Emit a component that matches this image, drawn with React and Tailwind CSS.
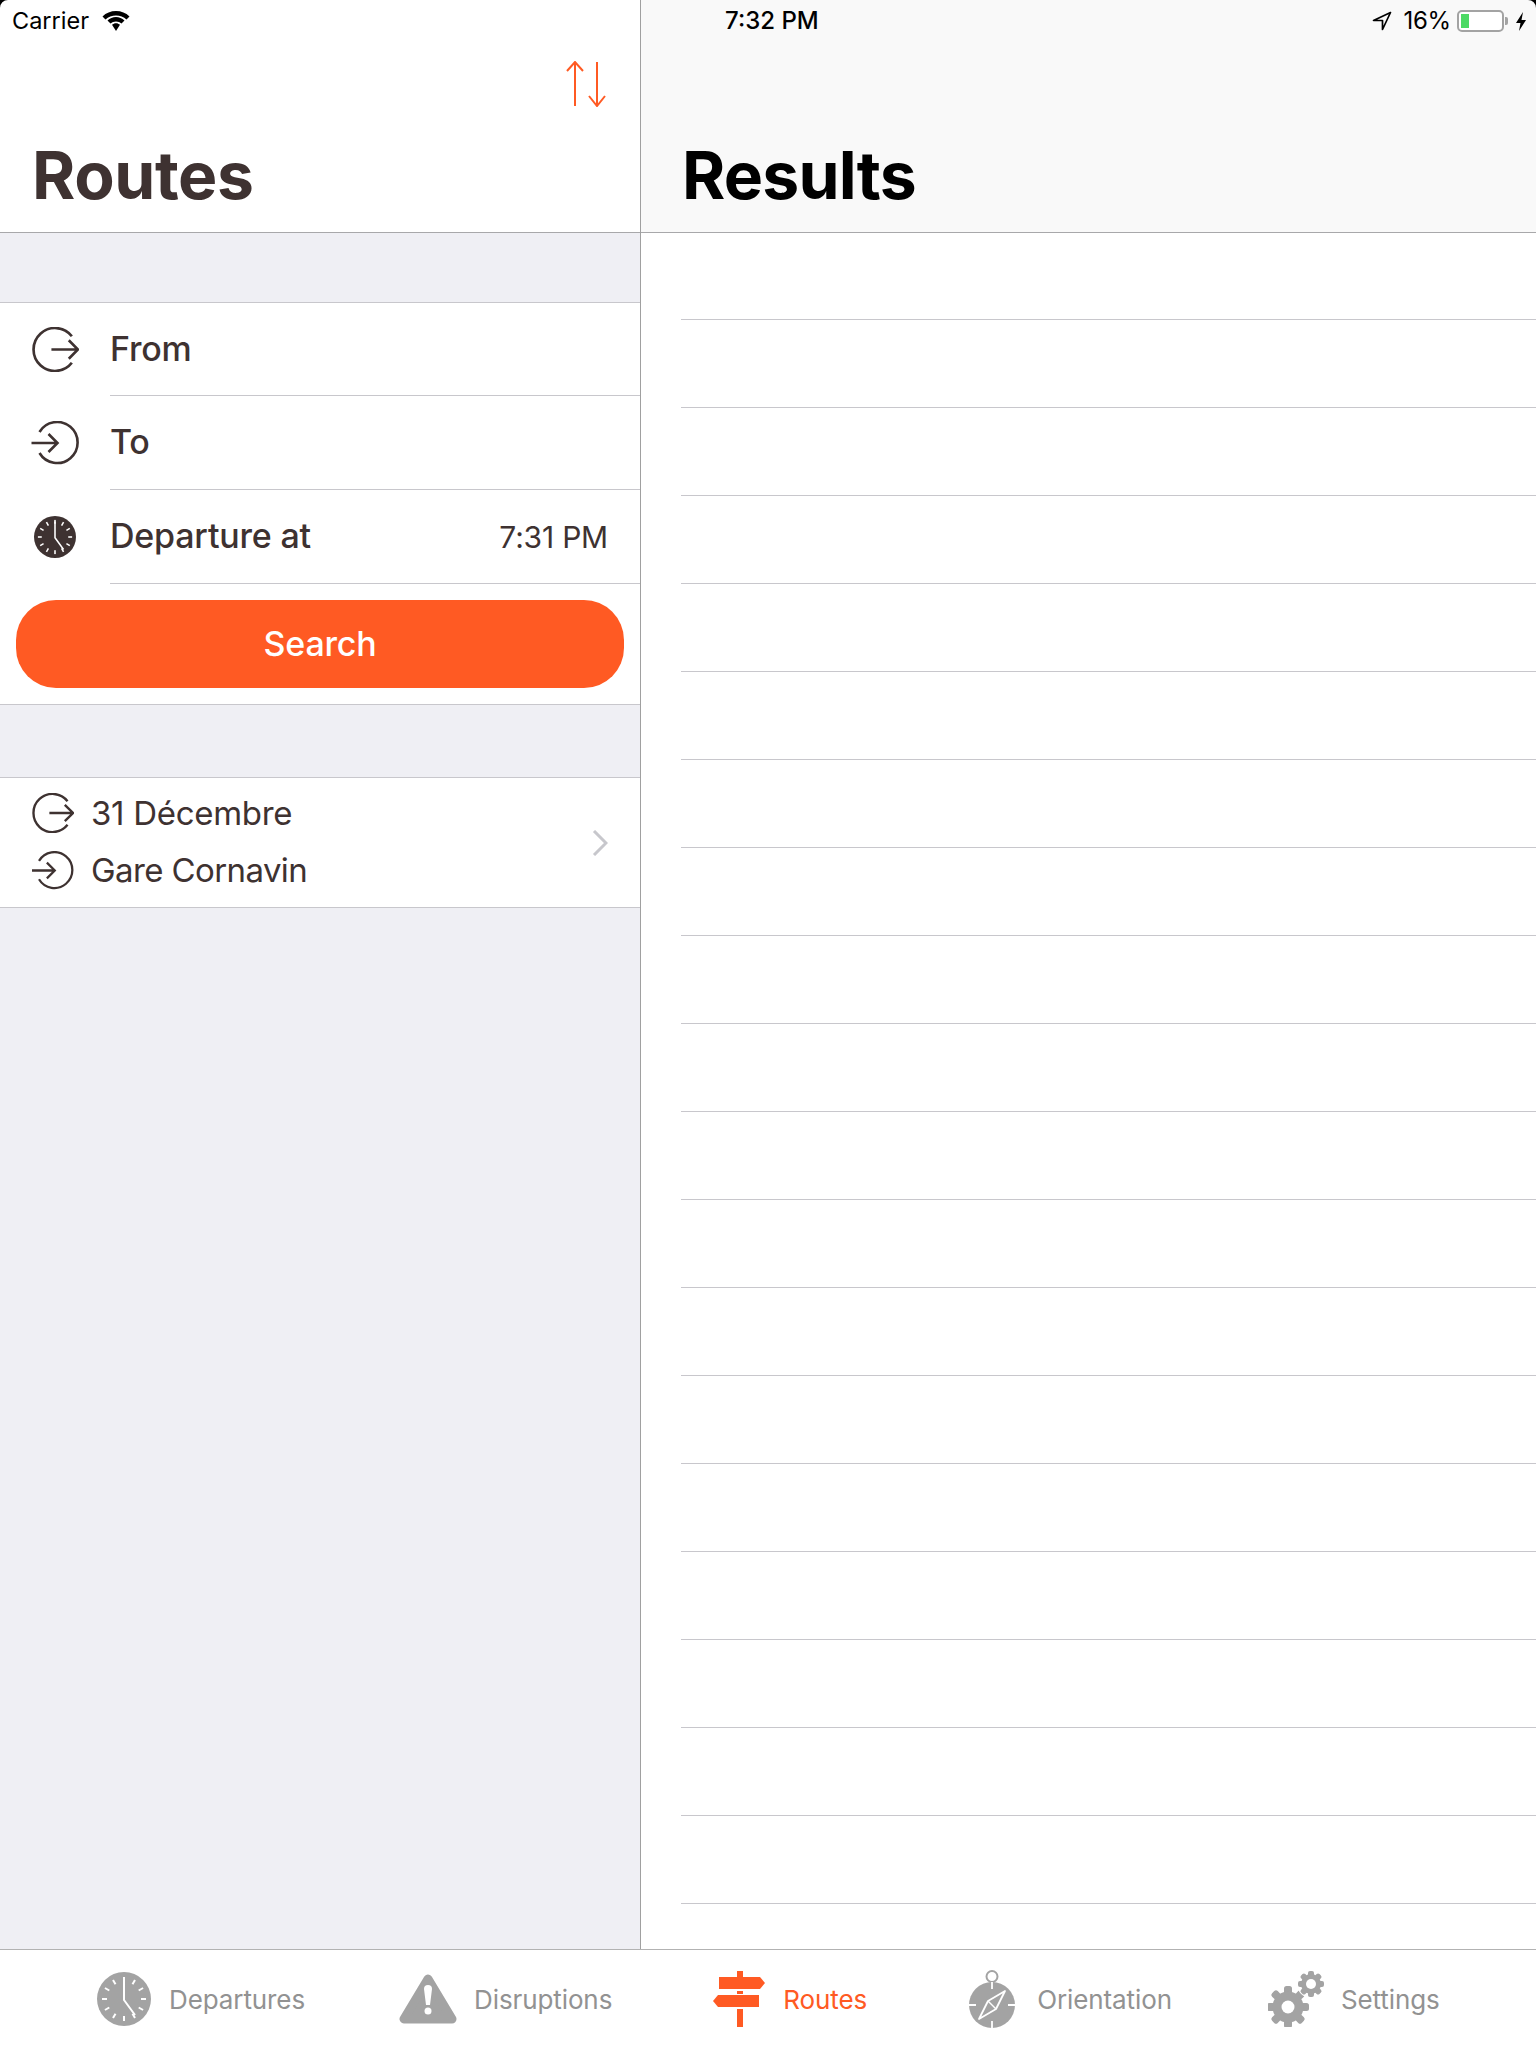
const ORANGE = "#ff5a23";
const DARK = "#3e3231";
const GREY = "#a3a3a3";

const resultLines = Array.from({ length: 19 }, (_, i) => i);
const angles = [0, 30, 60, 90, 120, 150, 180, 210, 240, 270, 300, 330];
const teeth = [0, 45, 90, 135, 180, 225, 270, 315];

const FromIcon = ({ className }) => (
  <svg className={className} viewBox="0 0 46 44" fill="none" stroke={DARK} strokeWidth="2.6">
    <path d="M39 9A21 21 0 1 0 39 35" />
    <path d="M19 22H45M36 13L45 22L36 31" />
  </svg>
);

const ToIcon = ({ className }) => (
  <svg className={className} viewBox="0 0 48 44" fill="none" stroke={DARK} strokeWidth="2.6">
    <path d="M8 11A20.5 20.5 0 1 1 8 32" />
    <path d="M0 22H26M17 13L26 22L17 31" />
  </svg>
);

const ClockIcon = ({ className, fill, tick }) => (
  <svg className={className} viewBox="0 0 54 54">
    <circle cx="27" cy="27" r="27" fill={fill} />
    {angles.map((a) => (
      <rect key={a} x="26" y="5" width="2" height="5" fill={tick} transform={`rotate(${a} 27 27)`} />
    ))}
    <path d="M27 7V28L38 43" fill="none" stroke={tick} strokeWidth="2" />
  </svg>
);

const WarningIcon = () => (
  <svg className="w-[58px] h-[50px]" viewBox="0 0 58 50">
    <path d="M29 5L5 45H53Z" fill={GREY} stroke={GREY} strokeWidth="9" strokeLinejoin="round" />
    <path d="M25 15a4 4 0 0 1 8 0L31 31h-4Z" fill="white" />
    <circle cx="29" cy="37" r="3.5" fill="white" />
  </svg>
);

const SignIcon = () => (
  <svg className="w-[53px] h-[56px]" viewBox="0 0 53 56" fill={ORANGE}>
    <rect x="24" y="0" width="6" height="6" />
    <path d="M6 6H47L52 12L47 18H6Z" />
    <rect x="24" y="20" width="6" height="3" />
    <path d="M46 24H5L0 30L5 36H46Z" />
    <rect x="24" y="38" width="6" height="18" />
  </svg>
);

const CompassIcon = () => (
  <svg className="w-[46px] h-[58px]" viewBox="0 0 46 58">
    <circle cx="23" cy="35" r="23" fill={GREY} />
    <circle cx="23" cy="6.5" r="5.5" fill="none" stroke={GREY} strokeWidth="2" />
    <path d="M23 12V19M23 51V58M0 35H7M39 35H46" stroke="white" strokeWidth="1.8" />
    <path d="M36 21L19 31L10 49L27 39Z" fill="none" stroke="white" strokeWidth="1.8" strokeLinejoin="round" />
    <path d="M19 31L27 39" stroke="white" strokeWidth="1.4" />
  </svg>
);

const GearIcon = () => (
  <svg className="w-[56px] h-[56px]" viewBox="0 0 56 56">
    {teeth.map((a) => (
      <rect key={a} x="16" y="15" width="8" height="8" rx="2.5" fill={GREY} transform={`rotate(${a} 20 36)`} />
    ))}
    <circle cx="20" cy="36" r="15.5" fill={GREY} />
    <circle cx="20" cy="36" r="6.5" fill="white" />
    <circle cx="43" cy="13" r="14" fill="white" />
    {teeth.map((a) => (
      <rect key={a} x="40" y="0" width="6" height="6" rx="2" fill={GREY} transform={`rotate(${a} 43 13)`} />
    ))}
    <circle cx="43" cy="13" r="10" fill={GREY} />
    <circle cx="43" cy="13" r="5" fill="white" />
  </svg>
);

const FormRow = ({ icon, label, value, height, last }) => (
  <div className={`flex ${height}`}>
    <div className="w-[110px] shrink-0 flex items-center">{icon}</div>
    <div className={`flex-1 flex items-center justify-between pr-[32px] ${last ? "" : "border-b border-[#c8c7cc]"}`}>
      <span className="text-[34px] pb-[2px] font-medium tracking-[-0.2px] text-[#3e3231]">{label}</span>
      {value && <span className="text-[30px] pt-[2px] tracking-[-0.2px] text-[#3e3231]">{value}</span>}
    </div>
  </div>
);

const Tab = ({ icon, label, active, gap }) => (
  <div className={`flex items-center ${gap}`}>
    {icon}
    <span className={`text-[26px] tracking-[-0.1px] ${active ? "text-[#ff5a23]" : "text-[#929292]"}`}>{label}</span>
  </div>
);

export default function App() {
  return (
    <div className="relative w-[1536px] h-[2048px] flex flex-col overflow-hidden bg-white font-['Inter',sans-serif]">
      {/* Screen corners */}
      <svg className="absolute top-0 left-0 w-[8px] h-[8px]" viewBox="0 0 8 8">
        <path d="M0 0H8A8 8 0 0 0 0 8Z" fill="black" />
      </svg>
      <svg className="absolute top-0 right-0 w-[8px] h-[8px]" viewBox="0 0 8 8">
        <path d="M0 0H8V8A8 8 0 0 0 0 0Z" fill="black" />
      </svg>

      <div className="flex-1 flex min-h-0">
        {/* Left column */}
        <div className="w-[641px] shrink-0 flex flex-col border-r border-[#a0a0a0] bg-[#efeff4]">
          <div className="h-[233px] shrink-0 flex flex-col bg-white border-b border-[#a8a8aa]">
            <div className="h-[42px] shrink-0 flex items-center pl-[12px] gap-[13px]">
              <span className="text-[23.500px] text-black">Carrier</span>
              <svg className="w-[28px] h-[20px]" viewBox="0 0 28 20" fill="black">
                <path d="M14 0C8.800 0 4 2 0.500 5.400L3.500 8.500C6.300 5.800 10 4.400 14 4.400S21.700 5.800 24.500 8.500L27.500 5.400C24 2 19.200 0 14 0Z" />
                <path d="M14 6C10.800 6 7.800 7.200 5.500 9.500L8.500 12.600C10 11.300 11.900 10.500 14 10.500S18 11.300 19.500 12.600L22.500 9.500C20.200 7.200 17.200 6 14 6Z" />
                <path d="M14 12.200C12.500 12.200 11.100 12.800 10 13.800L14 20L18 13.800C16.900 12.800 15.500 12.200 14 12.200Z" />
              </svg>
            </div>
            <div className="h-[48px] shrink-0 flex justify-end pt-[19px] pr-[34px]">
              <svg className="w-[40px] h-[46px]" viewBox="0 0 40 46" fill="none" stroke={ORANGE} strokeWidth="2">
                <path d="M9 45V1M1 10L9 1L17 10" />
                <path d="M31 1V45M23 35L31 45L39 35" />
              </svg>
            </div>
            <div className="flex-1 flex items-end pl-[32px] pb-[17px]">
              <h1 className="text-[66px] leading-[80px] font-bold tracking-[-0.4px] text-[#3e3231]">Routes</h1>
            </div>
          </div>

          {/* Search form */}
          <div className="mt-[69px] flex flex-col bg-white border-y border-[#c8c7cc]">
            <FormRow height="h-[93px]" label="From" icon={<FromIcon className="ml-[32px] w-[47px] h-[45px]" />} />
            <FormRow height="h-[94px]" label="To" icon={<ToIcon className="ml-[31px] w-[49px] h-[44px]" />} />
            <FormRow
              height="h-[94px]"
              label="Departure at"
              value="7:31 PM"
              icon={<ClockIcon className="ml-[34px] w-[42px] h-[42px]" fill={DARK} tick="white" />}
            />
            <div className="px-[16px] py-[16px]">
              <button className="w-full h-[88px] pb-[2px] rounded-[40px] bg-[#ff5a23] text-white text-[34px] font-medium tracking-[-0.2px]">
                Search
              </button>
            </div>
          </div>

          {/* Recent route */}
          <div className="mt-[72px] h-[131px] flex items-center justify-between bg-white border-y border-[#c8c7cc] pl-[32px] pr-[32px]">
            <div className="mb-[2px] flex flex-col gap-[17px] text-[33px] leading-[40px] text-[#3e3231]">
              <div className="flex items-center gap-[17px]">
                <FromIcon className="w-[42px] h-[40px]" />
                <span className="tracking-[-0.3px]">31 Décembre</span>
              </div>
              <div className="flex items-center gap-[17px]">
                <ToIcon className="w-[42px] h-[39px]" />
                <span className="tracking-[-0.6px]">Gare Cornavin</span>
              </div>
            </div>
            <svg className="w-[16px] h-[26px]" viewBox="0 0 16 26" fill="none" stroke="#c7c7cc" strokeWidth="3">
              <path d="M2 1L14 13L2 25" />
            </svg>
          </div>
        </div>

        {/* Right column */}
        <div className="flex-1 min-w-0 flex flex-col overflow-hidden">
          <div className="h-[233px] shrink-0 flex flex-col bg-[#f9f9f9] border-b border-[#a8a8aa]">
            <div className="h-[42px] shrink-0 flex items-center justify-between pl-[84px] pr-[10px]">
              <span className="text-[24px] font-medium text-black">7:32 PM</span>
              <div className="flex items-center">
                <svg className="w-[20px] h-[20px] mr-[11px]" viewBox="0 0 20 20" fill="none" stroke="black" strokeWidth="1.700" strokeLinejoin="round">
                  <path d="M18.500 1.500L1.500 9.500H10.500V18.500Z" />
                </svg>
                <span className="text-[24px] text-black tracking-[-0.2px] mr-[6px]">16%</span>
                <div className="w-[47px] h-[22px] rounded-[5px] border-2 border-[#a3a3a3] p-[2px] bg-white">
                  <div className="w-[8px] h-full bg-[#4cd964]" />
                </div>
                <div className="w-[3px] h-[8px] rounded-r-[2px] bg-[#a3a3a3] ml-[1px] mr-[8px]" />
                <svg className="w-[10px] h-[19px]" viewBox="0 0 10 19" fill="black">
                  <path d="M7 0L0 11H4.500L3 19L10 8H5.500Z" />
                </svg>
              </div>
            </div>
            <div className="flex-1 flex items-end pl-[41px] pb-[17px]">
              <h1 className="text-[66px] leading-[80px] font-bold tracking-[-0.8px] text-black">Results</h1>
            </div>
          </div>
          <div className="-mt-px flex flex-col">
            {resultLines.map((line) => (
              <div key={line} className="h-[88px] shrink-0 ml-[40px] border-b border-[#c8c7cc]" />
            ))}
          </div>
        </div>
      </div>

      {/* Tab bar */}
      <div className="h-[99px] shrink-0 flex items-center pl-[97px] bg-white border-t border-[#b2b2b2]">
        <Tab gap="gap-[18px]" label="Departures" icon={<ClockIcon className="w-[54px] h-[54px]" fill={GREY} tick="white" />} />
        <div className="w-[94px]" />
        <Tab gap="gap-[17px]" label="Disruptions" icon={<WarningIcon />} />
        <div className="w-[101px]" />
        <Tab gap="gap-[17px]" label="Routes" active icon={<SignIcon />} />
        <div className="w-[102px]" />
        <Tab gap="gap-[22px]" label="Orientation" icon={<CompassIcon />} />
        <div className="w-[96px]" />
        <Tab gap="gap-[17px]" label="Settings" icon={<GearIcon />} />
      </div>
    </div>
  );
}
